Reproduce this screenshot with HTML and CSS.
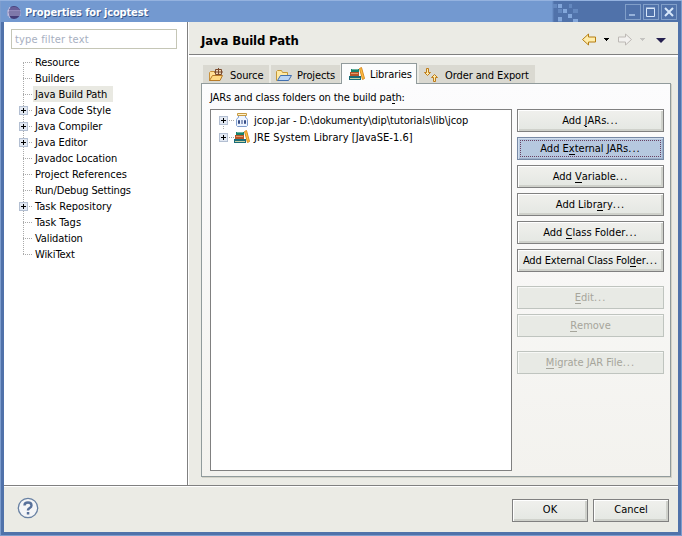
FILE: index.html
```html
<!DOCTYPE html>
<html lang="en">
<head>
<meta charset="utf-8">
<title>Properties for jcoptest</title>
<link rel="stylesheet" href="styles.css">
</head>
<body>
<div class="window">
  <header class="titlebar">
    <svg class="logo" width="15" height="15" viewBox="0 0 15 15"><circle cx="7" cy="7.500" r="6.500" fill="#443c78"/><path d="M2 3.500Q7 0 12 3.500L13 6H1z" fill="#685f98"/><path d="M0 6h14M0 8h14M0 10h14" stroke="#b9b5dc"/><path d="M3 2Q-1 7.500 3 13" stroke="#c9c9e8" fill="none"/></svg>
    <h1 class="title">Properties for jcoptest</h1>
    <svg class="pixels" width="26" height="20" viewBox="0 0 26 20"><path d="M0 2h4v4H0zM5 7h4v4H5zM5 17h4v3H5zM16 2h3v4h-3zM20 7h5v4h-5zM10 8h4v3h-4z" fill="#6488bf"/><path d="M5 2h4v4H5zM10 7h4v4h-4zM15 12h4v4h-4zM5 15h4v4H5zM20 17h5v3h-5z" fill="#83a7db"/></svg>
    <div class="controls">
      <svg width="16" height="16"><rect x=".5" y=".5" width="15" height="15"/><path class="min" d="M4 11h6"/></svg>
      <svg width="16" height="16"><rect x=".5" y=".5" width="15" height="15"/><path class="max" d="M3.500 4.500h8v8h-8zM3 4h9"/></svg>
      <svg width="16" height="16"><rect x=".5" y=".5" width="15" height="15"/><path class="cls" d="M4 4l8 8M12 4l-8 8"/></svg>
    </div>
  </header>
  <div class="body">
    <nav class="sidebar">
      <div class="filter"><span>type filter text</span></div>
      <ul class="tree">
        <li><span>Resource</span></li>
        <li><span>Builders</span></li>
        <li class="selected"><span>Java Build Path</span></li>
        <li><i class="plus"></i><span>Java Code Style</span></li>
        <li><i class="plus"></i><span>Java Compiler</span></li>
        <li><i class="plus"></i><span>Java Editor</span></li>
        <li><span>Javadoc Location</span></li>
        <li class="even"><span>Project References</span></li>
        <li class="tight"><span>Run/Debug Settings</span></li>
        <li class="even"><i class="plus"></i><span>Task Repository</span></li>
        <li class="even"><span>Task Tags</span></li>
        <li><span>Validation</span></li>
        <li class="last"><span>WikiText</span></li>
      </ul>
    </nav>
    <main class="page">
      <div class="heading">
        <h2>Java Build Path</h2>
        <svg class="nav" width="88" height="16" viewBox="0 0 88 16"><path d="M.5 7.500l6-5.500v3h7v5h-7v3z" fill="#ffedac" stroke="#b57d10"/><path d="M22 6h5v1h-1v1h-1v1h-1v-1h-1v-1h-1z" fill="#000"/><path d="M49.500 7.500l-6-5.500v3h-7v5h7v3z" fill="#f2f1ef" stroke="#bdb9b5"/><path d="M58 6h5v1h-1v1h-1v1h-1v-1h-1v-1h-1z" fill="#c5c4c1"/><path d="M74 6h10l-5 5z" fill="#25204f"/></svg>
      </div>
      <div class="tabs">
        <div class="tab source"><svg width="16" height="16" viewBox="0 0 16 16"><path d="M.5 12.500v-8l1-1h4l1 2h4v7z" fill="#ffe096" stroke="#c8903a"/><path d="M6.500 1.500h6v5h-6zM9.500 0v7M5 4h9" fill="#f0d9b8" stroke="#7b4b2d"/><path d="M.5 12.500l3-5h10l-2.500 5z" fill="#ffda83" stroke="#b87b28"/></svg><span>Source</span></div>
        <div class="tab projects"><svg width="16" height="16" viewBox="0 0 16 16"><path d="M.5 12.500v-9l1-1h4l1 2h5v8z" fill="#ffe9a3" stroke="#c49838"/><path d="M1.500 12.500l3-5h11l-3 5z" fill="#b9d4f5" stroke="#416fae"/></svg><span>Projects</span></div>
        <div class="tab active"><svg width="16" height="16" viewBox="0 0 16 16"><use href="#books"/></svg><span>Libraries</span></div>
        <div class="tab order"><svg width="16" height="16" viewBox="0 0 16 16"><path d="M2.500.5h2v4h2l-3 3-3-3h2zM9.500 13.500h2v-4h2l-3-3-3 3h2z" fill="#ffedac" stroke="#bd7b1b"/></svg><span>Order and Export</span></div>
      </div>
      <section class="panel">
        <p class="caption"><span>JARs and class folders on the build pa<u>t</u>h:</span></p>
        <div class="columns">
          <ul class="list">
            <li><i class="plus"></i><svg width="16" height="16" viewBox="0 0 16 16"><path d="M4.500 2.500v2q-2 1-2 2v6l1 1h9l1-1v-6q0-1-2-2v-2z" fill="#edf4ff" stroke="#7e9ccd"/><path d="M3.500.5h9v2h-9z" fill="#fff1c8" stroke="#c79a42"/><path d="M4.500 7.500h1v3h-1zM8 7v4M10.500 7.500h1v3h-1z" fill="none" stroke="#243c7b" stroke-width=".9"/></svg><span>jcop.jar - D:\dokumenty\dip\tutorials\lib\jcop</span></li>
            <li><i class="plus"></i><svg width="16" height="16" viewBox="0 0 16 16"><g id="books"><path d="M2 2h8v3H2z" fill="#16806c"/><path d="M3 2.500h6" stroke="#6ab29c"/><path d="M1 5h9v4H1z" fill="#b85426"/><path d="M2 6.500h7" stroke="#e39a68"/><path d="M0 9h12v4H0z" fill="#1b6c78"/><path d="M1 11.500h10" stroke="#c9d2a4"/><path d="M10.500 1.500l2-1 3 11-2 1z" fill="#ffc343" stroke="#d98a22"/></g></svg><span>JRE System Library [JavaSE-1.6]</span></li>
          </ul>
          <div class="actions">
            <button><span>Add <u>J</u>ARs<b>...</b></span></button>
            <button class="focused"><span>Add E<u>x</u>ternal JARs<b>...</b></span></button>
            <button><span>Add <u>V</u>ariable<b>...</b></span></button>
            <button><span>Add Libr<u>a</u>ry<b>...</b></span></button>
            <button><span>Add <u>C</u>lass Folder<b>...</b></span></button>
            <button class="long"><span>Add External Class Fol<u>d</u>er<b>...</b></span></button>
            <button class="gap" disabled><span><u>E</u>dit<b>...</b></span></button>
            <button disabled><span><u>R</u>emove</span></button>
            <button class="gap" disabled><span><u>M</u>igrate JAR File<b>...</b></span></button>
          </div>
        </div>
      </section>
    </main>
  </div>
  <footer class="footer">
    <svg width="22" height="22" viewBox="0 0 22 22"><circle cx="11" cy="11" r="9.700" fill="#f4f5f7" stroke="#6881a3" stroke-width="1.300"/><path d="M7.500 8.500Q7.500 5.500 11 5.500t3.500 3q0 1.500-1.800 2.500T11 13.500" fill="none" stroke="#58719b" stroke-width="2.400"/><path d="M9.800 15h2.500v2.500H9.800z" fill="#58719b"/></svg>
    <button><span>OK</span></button>
    <button><span>Cancel</span></button>
  </footer>
</div>
</body>
</html>
```
FILE: styles.css
```css
* { box-sizing: border-box; }
body { margin: 0; font: 11px/16px "DejaVu Sans Condensed", "DejaVu Sans", sans-serif; font-stretch: condensed; color: #000; }
h1, h2, p, ul { margin: 0; padding: 0; }
ul { list-style: none; }
svg { display: block; flex: none; }
span { white-space: nowrap; }
u { text-decoration: none; border-bottom: 1px solid currentColor; display: inline-block; line-height: 11px; }
.window { width: 682px; height: 536px; padding: 0 4px 4px; background: #5072aa; border-top: 1px solid #94b2df; box-shadow: inset 1px 0 #7d9dce, inset -1px -1px #7d9dce; display: flex; flex-direction: column; }
.titlebar { height: 21px; display: flex; align-items: center; margin: 0 -3px; padding: 0 4px 0 6px; background: linear-gradient(90deg, #7399d0 0 551px, #5072aa 553px); }
.logo { margin-top: 1px; }
.title { font-size: 11px; line-height: 16px; font-weight: bold; letter-spacing: -0.15px; color: #fff; margin: 2px 0 0 3px; flex: 1; text-shadow: 1px 1px #38588c; }
.pixels { margin-right: 46px; }
.controls { display: flex; gap: 2px; margin-top: 1px; }
.controls svg { fill: none; stroke: #819fc9; }
.controls .min { stroke: #96b2da; stroke-width: 2; }
.controls .max, .controls .cls { stroke: #d7e7fa; }
.controls .cls { stroke-width: 2; }
.body { height: 463px; display: flex; background: #ebebe5; }
.sidebar { width: 184px; flex: none; background: #fff; border-right: 1px solid #808080; padding: 7px; }
.filter { width: 166px; height: 20px; border: 1px solid #c5c6b6; padding: 2px 3px; color: #a7afbf; letter-spacing: 0.18px; }
.tree { margin: 5px 0 0 12px; }
.tree li { height: 16px; line-height: 15px; display: flex; align-items: center; padding-left: 11px; letter-spacing: -0.1px; background: repeating-linear-gradient(90deg, #aaa 0 1px, transparent 1px 2px) 0 8px / 9px 1px no-repeat, repeating-linear-gradient(0deg, #aaa 0 1px, transparent 1px 2px) 0 0 / 1px 16px no-repeat; }
.tree li.tight { letter-spacing: -0.15px; }
.tree li.even { letter-spacing: 0; }
.tree li.last { background-size: 9px 1px, 1px 8px; }
.tree li:first-child { background-position: 0 8px, 0 8px; }
.tree span { padding: 1px 1px 0; }
.tree .selected span { background: #e9e9e2; padding-right: 6px; padding-left: 2px; margin-left: -1px; }
.plus { width: 9px; height: 9px; flex: none; border: 1px solid #b3bfd2; background: linear-gradient(#000, #000) 1px 3px / 5px 1px no-repeat, linear-gradient(#000, #000) 3px 1px / 1px 5px no-repeat, #e2e8f2; }
.tree .plus { margin: 1px 6px 0 -15px; }
.page { flex: 1; min-width: 0; display: flex; flex-direction: column; border-left: 1px solid #fff; }
.heading { height: 36px; border-bottom: 2px solid #fff; box-shadow: inset 0 -1px #808080; display: flex; align-items: center; justify-content: space-between; padding: 2px 8px 0 12px; }
.heading h2 { font-size: 13px; font-weight: bold; letter-spacing: -0.13px; padding-top: 2px; }
.tabs { display: flex; gap: 2px; padding-left: 14px; height: 27px; align-items: flex-end; margin-top: -1px; position: relative; }
.tab { height: 18px; background: #dad9d1; display: flex; align-items: center; padding: 3px 0 0 6px; gap: 5px; letter-spacing: -0.1px; }
.source { width: 66px; }
.projects { width: 69px; padding-left: 5px; }
.order { width: 116px; padding-left: 5px; }
.active { width: 76px; height: 21px; margin: 0 0 -1px -1px; background: #fcfdfd; border: 1px solid #919b9c; border-bottom: 0; padding: 3px 0 2px 7px; }
.panel { margin: 0 7px 8px 12px; height: 394px; border: 1px solid #919b9c; background: linear-gradient(#fcfcfd, #f3f2ee); box-shadow: 1px 1px #d3d2c8; padding: 5px 6px 6px 8px; }
.caption { height: 19px; padding-top: 1px; letter-spacing: -0.11px; }
.columns { display: flex; gap: 5px; padding-top: 1px; }
.list { width: 302px; height: 362px; border: 1px solid #808080; background: #fff; padding: 2px 8px; letter-spacing: -0.09px; }
.list li { height: 17px; display: flex; align-items: center; background: repeating-linear-gradient(90deg, #aaa 0 1px, transparent 1px 2px) 10px 8px / 5px 1px no-repeat; }
.list li:first-child { background: repeating-linear-gradient(90deg, #aaa 0 1px, transparent 1px 2px) 10px 8px / 5px 1px no-repeat, repeating-linear-gradient(0deg, #aaa 0 1px, transparent 1px 2px) 4px 13px / 1px 4px no-repeat; }
.list li + li { letter-spacing: 0.04px; }
.list svg { margin: 0 4px 0 6px; }
.actions { display: flex; flex-direction: column; gap: 5px; }
button { font: inherit; color: inherit; width: 148px; height: 23px; border: 1px solid #808080; padding: 1px 0 0; display: flex; align-items: center; justify-content: center; background: linear-gradient(#f0f0ed, #e4e7e2); box-shadow: inset 1px 1px #fff, inset -2px -2px #cfd1cb; }
button b { font-weight: normal; letter-spacing: 1px; }
.actions button { width: 147px; }
.long { letter-spacing: -0.14px; }
button.gap { margin-top: 9px; }
button:disabled { color: #a6a59b; border-color: #bfc4bf; background: #e8eae5; box-shadow: inset 1px 1px #f7f8f6; }
.focused { background: #b6c8df; border-color: #7789a5; box-shadow: inset 1px 1px #d1deee, inset -1px -1px #9cafca; position: relative; }
.focused::after { content: ""; position: absolute; inset: 2px; border: 1px dotted #684162; }
.footer { height: 47px; background: #ebebe5; border-top: 1px solid #808080; box-shadow: inset 0 1px #fff; display: flex; align-items: center; padding: 2px 9px 0 13px; gap: 5px; }
.footer svg { margin: -4px auto 0 0; }
.footer button { width: 76px; padding-top: 0; }
```
